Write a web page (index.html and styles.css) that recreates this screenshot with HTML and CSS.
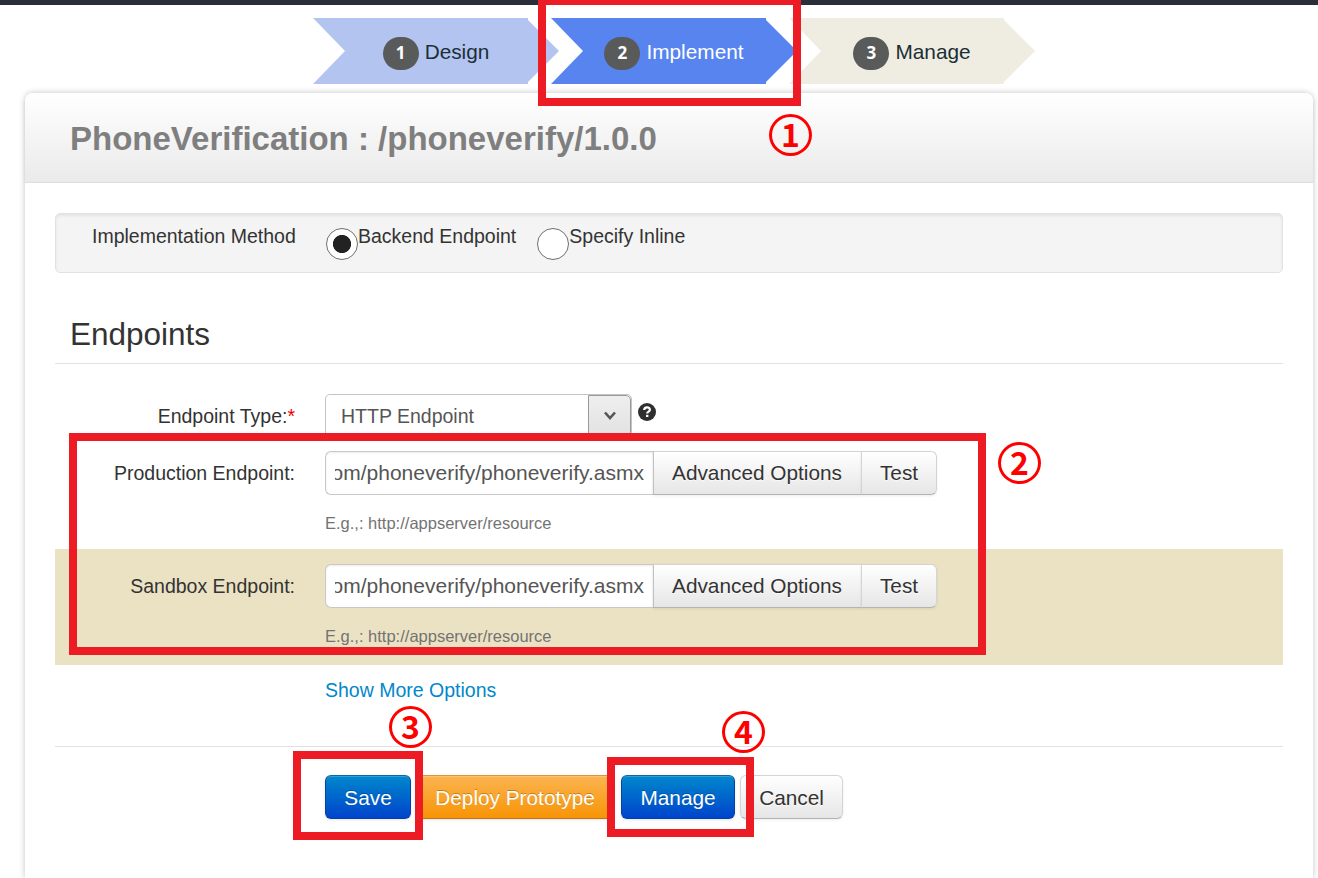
FILE: index.html
```html
<!DOCTYPE html>
<html lang="en">
<head>
<meta charset="utf-8">
<title>PhoneVerification</title>
<link rel="stylesheet" href="styles.css">
</head>
<body>
<div class="topbar"></div>
<nav class="steps">
  <div class="step step-done">
    <svg class="step-shape" viewBox="0 0 246 66"><path d="M0 0H215V2L246 33L215 64V66H0L32 33Z"/></svg>
    <span class="step-num">1</span><span class="step-name">Design</span>
  </div>
  <div class="step step-active">
    <svg class="step-shape" viewBox="0 0 246 66"><path d="M0 0H215V2L246 33L215 64V66H0L32 33Z"/></svg>
    <span class="step-num">2</span><span class="step-name">Implement</span>
  </div>
  <div class="step step-next">
    <svg class="step-shape" viewBox="0 0 246 66"><path d="M0 0H215V2L246 33L215 64V66H0L32 33Z"/></svg>
    <span class="step-num">3</span><span class="step-name">Manage</span>
  </div>
</nav>
<main class="panel">
  <header class="panel-head"><h1 class="title">PhoneVerification : /phoneverify/1.0.0</h1></header>
  <div class="panel-body">
    <div class="well">
      <span class="well-label">Implementation Method</span>
      <label class="choice"><span class="radio radio-on"></span><span class="choice-text">Backend Endpoint</span></label>
      <label class="choice"><span class="radio"></span><span class="choice-text">Specify Inline</span></label>
    </div>
    <h2 class="section">Endpoints</h2>
    <div class="row row-type">
      <span class="label">Endpoint Type:<span class="required">*</span></span>
      <div class="select"><span class="select-value">HTTP Endpoint</span>
        <span class="select-arrow"><svg width="12" height="10" viewBox="0 0 12 10"><path d="M1 1.5L6 7L11 1.5" fill="none" stroke="#555" stroke-width="2.6"/></svg></span>
      </div>
      <svg class="help" width="18" height="18" viewBox="0 0 18 18"><circle cx="9" cy="9" r="9" fill="#2f2f2f"/><path d="M6.2 7C6.2 3.4 11.9 3.5 11.9 6.8C11.9 8.8 9.2 8.5 9.2 10.5" fill="none" stroke="#fff" stroke-width="2.2"/><path d="M8 11.8H10.4V14H8Z" fill="#fff"/></svg>
    </div>
    <div class="row row-endpoint">
      <span class="label">Production Endpoint:</span>
      <div class="field">
        <div class="group"><div class="input"><span class="input-text">om/phoneverify/phoneverify.asmx</span></div><button class="btn btn-mid">Advanced Options</button><button class="btn btn-end">Test</button></div>
        <span class="hint">E.g.,: http://appserver/resource</span>
      </div>
    </div>
    <div class="row row-endpoint row-sandbox">
      <span class="label">Sandbox Endpoint:</span>
      <div class="field">
        <div class="group"><div class="input"><span class="input-text">om/phoneverify/phoneverify.asmx</span></div><button class="btn btn-mid">Advanced Options</button><button class="btn btn-end">Test</button></div>
        <span class="hint">E.g.,: http://appserver/resource</span>
      </div>
    </div>
    <a class="more">Show More Options</a>
    <div class="actions">
      <button class="btn btn-primary btn-save">Save</button>
      <button class="btn btn-warning">Deploy Prototype</button>
      <button class="btn btn-primary btn-manage">Manage</button>
      <button class="btn btn-cancel">Cancel</button>
    </div>
  </div>
</main>
<div class="mark mark-1"></div><span class="callout callout-1">1</span>
<div class="mark mark-2"></div><span class="callout callout-2">2</span>
<div class="mark mark-3"></div><span class="callout callout-3">3</span>
<div class="mark mark-4"></div><span class="callout callout-4">4</span>
</body>
</html>
```
FILE: styles.css
```css
* { box-sizing: border-box; }
body {
  margin: 0;
  position: relative;
  width: 1318px;
  height: 878px;
  overflow: hidden;
  background: #fff;
  color: #333;
  font: 19.5px/28px "Liberation Sans", Arial, sans-serif;
}
.topbar { height: 5px; background: #2a2e3b; }

.steps { display: flex; padding: 13px 0 0 313px; height: 88px; }
.step {
  position: relative;
  display: flex;
  flex: none;
  justify-content: center;
  gap: 6px;
  width: 246px;
  height: 66px;
  color: #1b2f36;
  font-size: 20.8px;
}
.step + .step { margin-left: -8px; }
.step-shape { position: absolute; left: 0; top: 0; width: 246px; height: 66px; }
.step-done { fill: #b3c4f0; }
.step-active { fill: #5784ef; color: #fff; }
.step-next { fill: #efede2; }
.step-num {
  position: relative;
  width: 36px;
  height: 33px;
  margin-top: 19px;
  border-radius: 17px;
  background: #595b5b;
  color: #fff;
  font: bold 17px/32px "Open Sans", "Noto Sans", sans-serif;
  text-align: center;
}
.step-name { position: relative; margin-top: 20px; }

.panel {
  width: 1288px;
  height: 785px;
  margin-left: 25px;
  border-radius: 8px 8px 0 0;
  background: #fff;
  box-shadow: 0 0 6px rgba(0, 0, 0, .24);
}
.panel-head {
  height: 90px;
  padding: 26px 45px 0;
  border-bottom: 1px solid #dedede;
  border-radius: 8px 8px 0 0;
  background: linear-gradient(#fff, #eaeaea);
  box-shadow: 0 2px 5px -2px rgba(0, 0, 0, .15);
}
.title { margin: 0; font-size: 33px; line-height: 40px; color: #7f7f7f; white-space: nowrap; }
.panel-body { position: relative; height: 695px; padding: 30px 30px 0 30px; background: #fff; }

.well {
  display: flex;
  height: 60px;
  padding: 8px 36px;
  border: 1px solid #e2e2e2;
  border-radius: 5px;
  background: #f4f4f4;
  box-shadow: inset 0 2px 3px rgba(0, 0, 0, .07);
}
.well-label { width: 234px; }
.choice { display: flex; margin-right: 21px; }
.radio {
  width: 32px;
  height: 32px;
  margin-top: 6px;
  border: 1px solid #707070;
  border-radius: 50%;
  background: #fff;
}
.radio-on { background: radial-gradient(circle, #222 8.7px, #fff 9.4px); }
.choice-text { white-space: nowrap; }

.section {
  height: 61px;
  margin: 30px 0 0;
  padding: 10px 15px 0;
  border-bottom: 1px solid #e2e2e2;
  font-size: 31.5px;
  line-height: 42px;
  font-weight: 400;
}
.row { display: flex; }
.label { flex: none; width: 240px; margin-right: 30px; padding-top: 8px; text-align: right; }
.required { color: #e00; }
.row-type { height: 57px; margin-top: 30px; }
.select {
  display: flex;
  width: 307px;
  height: 44px;
  border: 1px solid #c4c4c4;
  border-radius: 5px;
  color: #555;
}
.select-value { flex: 1; padding: 7px 15px; }
.select-arrow {
  display: flex;
  align-items: center;
  justify-content: center;
  width: 43px;
  border: 1px solid #999;
  border-radius: 0 5px 5px 0;
  background: linear-gradient(#eee, #e2e2e2);
}
.help { margin: 9px 0 0 6px; }
.row-endpoint { height: 98px; }
.field { display: flex; flex-direction: column; gap: 14px; }
.group { display: flex; height: 44px; }
.input {
  display: flex;
  justify-content: flex-end;
  width: 328px;
  padding: 0 9px;
  border: 1px solid #c8c8c8;
  border-right: 0;
  border-radius: 6px 0 0 6px;
  background: #fff;
  box-shadow: inset 0 1px 2px rgba(0, 0, 0, .08);
  color: #555;
  font-size: 21px;
  line-height: 42px;
}
.input-text { display: flex; justify-content: flex-end; width: 309px; overflow: hidden; white-space: nowrap; }
.btn {
  height: 44px;
  padding: 0;
  border: 1px solid #d4d4d4;
  border-bottom-color: #b3b3b3;
  border-radius: 6px;
  background: linear-gradient(#fff, #e6e6e6);
  box-shadow: 0 1px 3px rgba(0, 0, 0, .08);
  color: #333;
  font: 20.8px/40px "Liberation Sans", Arial, sans-serif;
  text-shadow: 0 1px 1px rgba(255, 255, 255, .75);
}
.btn-mid { width: 209px; padding-right: 1px; border-left-color: #c0c0c0; border-radius: 0; }
.btn-end { width: 76px; margin-left: -1px; border-radius: 0 6px 6px 0; }
.hint { font-size: 16.5px; color: #737373; }
.row-sandbox {
  height: 116px;
  padding-top: 15px;
  background: #ebe2c4;
}
.more { display: block; padding: 11px 0 0 270px; color: #0088cc; }
.actions {
  display: flex;
  margin-top: 42px;
  padding: 28px 0 0 270px;
  border-top: 1px solid #e2e2e2;
}
.actions .btn { padding-top: 2px; }
.btn-primary {
  border-color: #0867a8 #0643a5 #003faf;
  background: linear-gradient(#0088cc, #0044cc);
  box-shadow: inset 0 1px 0 rgba(255, 255, 255, .2), 0 1px 3px rgba(0, 0, 0, .1);
  color: #fff;
  text-shadow: 0 -1px 0 rgba(0, 0, 0, .25);
}
.btn-warning {
  width: 198px;
  margin-left: 5px;
  border-color: #d9953e #c58128 #bd7414;
  background: linear-gradient(#fbb450, #f89406);
  box-shadow: inset 0 1px 0 rgba(255, 255, 255, .2), 0 1px 3px rgba(0, 0, 0, .1);
  color: #fff;
  text-shadow: 0 -1px 0 rgba(0, 0, 0, .25);
}
.btn-save { width: 86px; }
.btn-manage { width: 114px; margin-left: 7px; }
.btn-cancel { width: 103px; margin-left: 5px; }

/* annotation frames and numbered callouts laid over the form */
.mark { position: absolute; border: 8px solid #ed1c24; }
.mark-1 { left: 538px; top: -3px; width: 263px; height: 109px; }
.mark-2 { left: 69px; top: 433px; width: 917px; height: 222px; }
.mark-3 { left: 293px; top: 751px; width: 130px; height: 89px; }
.mark-4 { left: 607px; top: 757px; width: 147px; height: 80px; }
.callout {
  position: absolute;
  width: 43px;
  height: 42px;
  border: 3px solid #f00;
  border-radius: 50%;
  color: #f00;
  font: bold 32px/32px "Noto Sans CJK KR", "Noto Sans", sans-serif;
  text-align: center;
}
.callout-1 { left: 769px; top: 114px; }
.callout-2 { left: 998px; top: 442px; }
.callout-3 { left: 389px; top: 706px; }
.callout-4 { left: 722px; top: 711px; }
```
